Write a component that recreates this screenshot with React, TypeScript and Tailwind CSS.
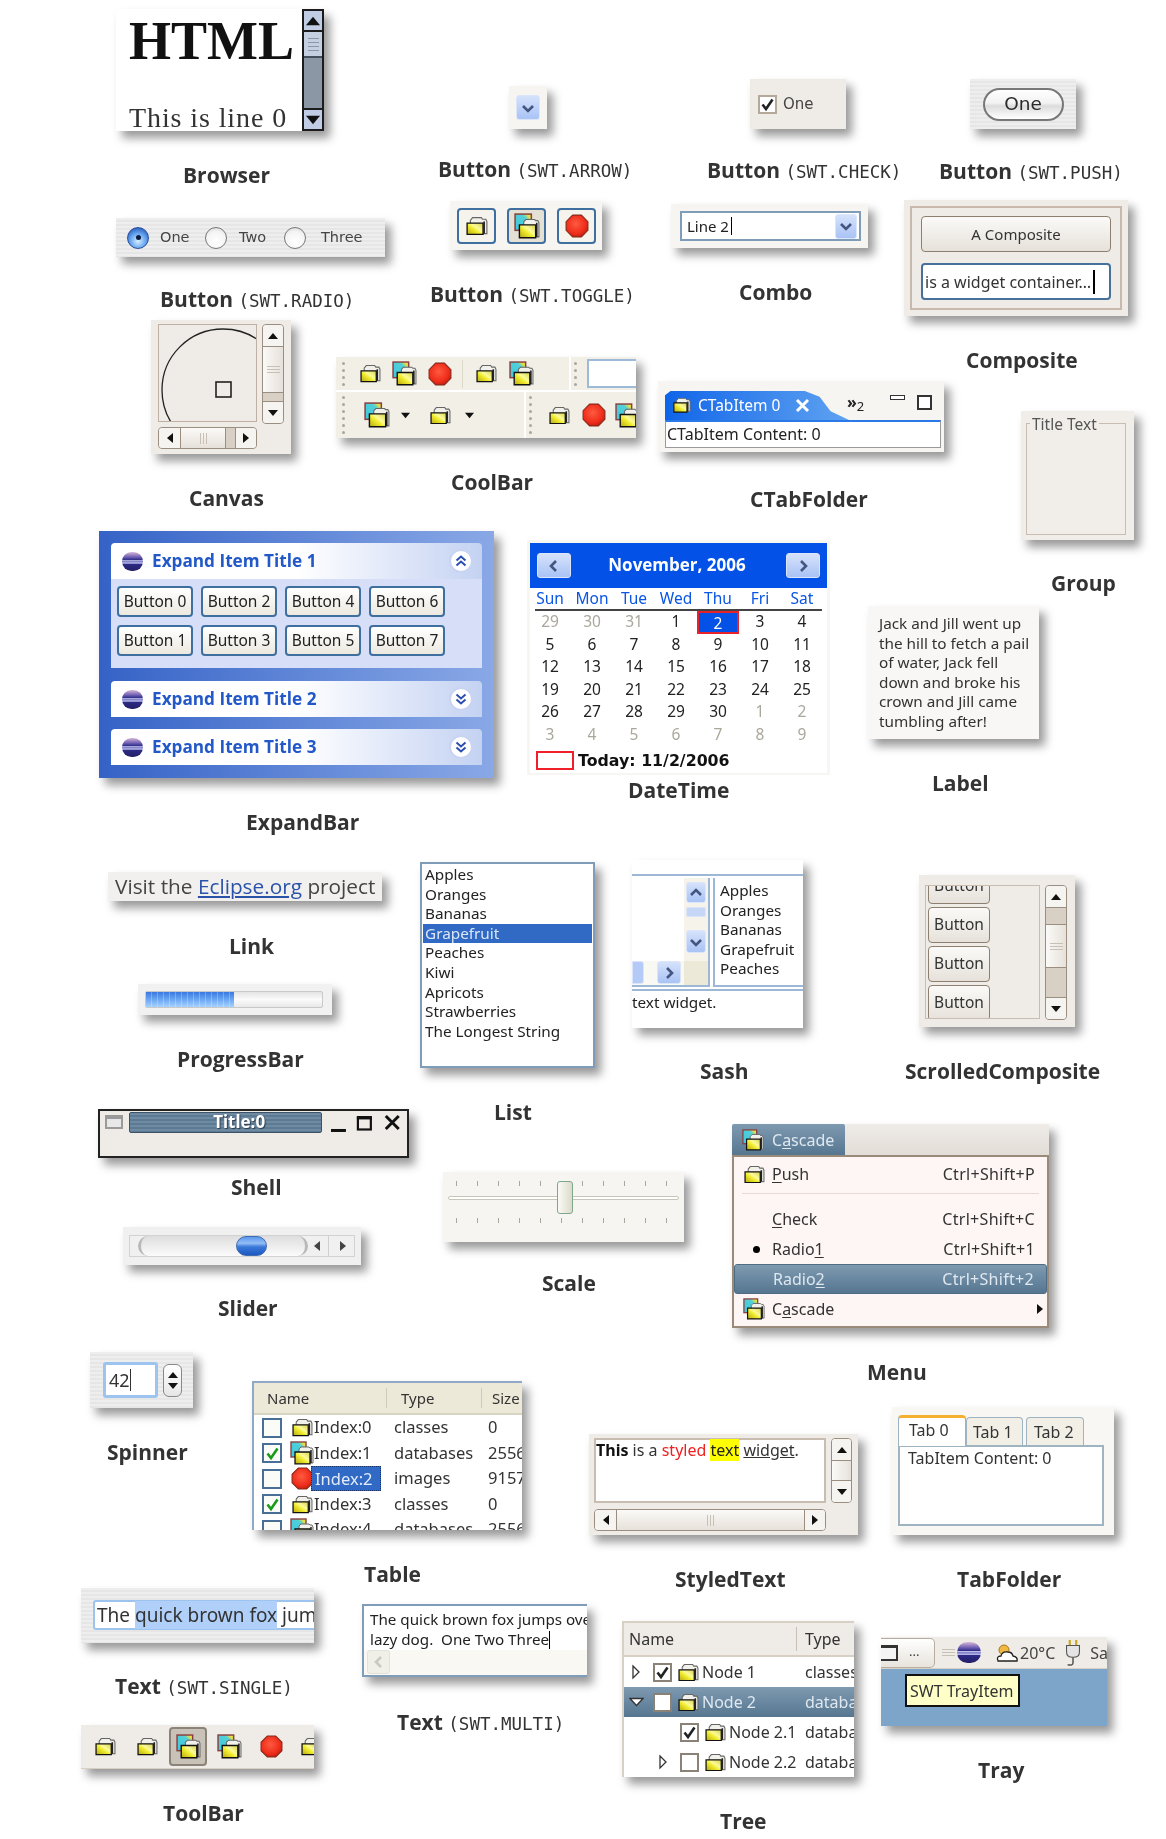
import React from "react";

const shadow = "shadow-[6px_7px_9px_rgba(0,0,0,0.4)]";
const pinstripe =
  "bg-[repeating-linear-gradient(180deg,#eeeeee_0px,#eeeeee_2px,#e6e6e6_2px,#e6e6e6_4px)]";
const gtkBtn =
  "flex items-center justify-center border border-[#8c7f70] rounded-[4px] bg-gradient-to-b from-[#fbfaf8] to-[#e6e1da]";
const xpBlueBtn =
  "flex items-center justify-center rounded-[3px] border border-[#dce6fb] bg-gradient-to-b from-[#d5e2fb] to-[#a9c3f5]";

// section captions under each widget
function Caption({ className, name, swt }: { className: string; name: string; swt?: string }) {
  return (
    <div
      className={
        "absolute whitespace-nowrap font-['Open_Sans',sans-serif] font-bold text-[21px] leading-[28px] text-[#333333] " +
        className
      }
    >
      {name}
      {swt && " "}
      {swt && (
        <span className="font-['DejaVu_Sans_Mono',monospace] font-normal text-[17.5px]">({swt})</span>
      )}
    </div>
  );
}

function SharedDefs() {
  return (
    <svg className="absolute w-0 h-0">
      <defs>
        <linearGradient id="folderFace" x1="0" y1="1" x2="1" y2="0">
          <stop offset="0" stopColor="#b8a810" />
          <stop offset="0.45" stopColor="#f2ee30" />
          <stop offset="0.6" stopColor="#fbfa9a" />
          <stop offset="1" stopColor="#d8d048" />
        </linearGradient>
        <linearGradient id="picFace" x1="0" y1="1" x2="1" y2="0">
          <stop offset="0" stopColor="#40c8e0" />
          <stop offset="0.7" stopColor="#50d0d8" />
          <stop offset="0.85" stopColor="#e8e040" />
        </linearGradient>
        <radialGradient id="stopFace" cx="0.45" cy="0.4" r="0.65">
          <stop offset="0" stopColor="#ff5a40" />
          <stop offset="0.7" stopColor="#ee2c1a" />
          <stop offset="1" stopColor="#b81c10" />
        </radialGradient>
      </defs>
    </svg>
  );
}

// the yellow open folder
function Folder({ size = 21 }: { size?: number }) {
  return (
    <svg width={size} height={size * 0.9} viewBox="0 0 20 18" className="shrink-0">
      <path d="M4 4 L6 1.5 H14 L15 3 H18 L19 5 V16 H4Z" fill="#f2f0ea" stroke="#666" />
      <path d="M16.5 5 V16" stroke="#222" strokeWidth="1.5" />
      <path d="M1 6.5 H15.5 V16.8 H1Z" fill="url(#folderFace)" stroke="#111" strokeWidth="1.2" />
    </svg>
  );
}

// picture with folder in front
function Folder2({ size = 24 }: { size?: number }) {
  return (
    <svg width={size} height={size} viewBox="0 0 24 24" className="shrink-0">
      <rect x="1" y="1" width="15" height="15" fill="url(#picFace)" stroke="#8a4040" strokeWidth="1.4" />
      <path d="M9 8 L11 6 H19 L20 7 H22 L23 9 V22 H9Z" fill="#f2f0ea" stroke="#666" />
      <path d="M21 9 V22" stroke="#222" strokeWidth="1.5" />
      <path d="M5 11 H20 V22.8 H5Z" fill="url(#folderFace)" stroke="#111" strokeWidth="1.3" />
    </svg>
  );
}

function StopIcon({ size = 22 }: { size?: number }) {
  return (
    <svg width={size} height={size} viewBox="0 0 22 22" className="shrink-0">
      <polygon
        points="7,1 15,1 21,7 21,15 15,21 7,21 1,15 1,7"
        fill="url(#stopFace)"
        stroke="#8a2a1a"
        strokeWidth="1"
      />
    </svg>
  );
}

function EclipseIcon({ className }: { className: string }) {
  return (
    <div
      className={
        "rounded-full shrink-0 bg-[linear-gradient(180deg,#d8b8d8_0%,#6a5ab0_28%,#2c2a86_42%,#dfe0ff_46%,#5858b0_52%,#dfe0ff_58%,#2c2a86_64%,#241f66_100%)] " +
        className
      }
    />
  );
}

function Tri({ dir, size = 10, color = "#111" }: { dir: "up" | "down" | "left" | "right"; size?: number; color?: string }) {
  const pts = {
    up: "5,2 10,8 0,8",
    down: "0,2 10,2 5,8",
    left: "8,0 8,10 2,5",
    right: "2,0 2,10 8,5",
  }[dir];
  return (
    <svg width={size} height={size} viewBox="0 0 10 10" className="shrink-0">
      <polygon points={pts} fill={color} />
    </svg>
  );
}

function Chevron({ dir, color = "#44557f", size = 14 }: { dir: "up" | "down" | "left" | "right"; color?: string; size?: number }) {
  const d = {
    up: "M2 9 L7 4 L12 9",
    down: "M2 5 L7 10 L12 5",
    left: "M9 2 L4 7 L9 12",
    right: "M5 2 L10 7 L5 12",
  }[dir];
  return (
    <svg width={size} height={size} viewBox="0 0 14 14" className="shrink-0">
      <path d={d} fill="none" stroke={color} strokeWidth="2.6" />
    </svg>
  );
}

function DoubleChevron({ up }: { up?: boolean }) {
  return (
    <svg width="14" height="14" viewBox="0 0 14 14">
      <path
        d={up ? "M2.5 6.5 L7 2.5 L11.5 6.5 M2.5 11.5 L7 7.5 L11.5 11.5" : "M2.5 2.5 L7 6.5 L11.5 2.5 M2.5 7.5 L7 11.5 L11.5 7.5"}
        fill="none"
        stroke="#2b4fb0"
        strokeWidth="2"
      />
    </svg>
  );
}

function Grip({ horizontal }: { horizontal?: boolean }) {
  return (
    <div className={"flex gap-[2px] " + (horizontal ? "flex-row" : "flex-col")}>
      <div className={"bg-[#c9c0b5] " + (horizontal ? "w-px h-[11px]" : "h-px w-[13px]")} />
      <div className={"bg-[#c9c0b5] " + (horizontal ? "w-px h-[11px]" : "h-px w-[13px]")} />
      <div className={"bg-[#c9c0b5] " + (horizontal ? "w-px h-[11px]" : "h-px w-[13px]")} />
    </div>
  );
}

function Dots({ n }: { n: number }) {
  return (
    <div className="flex flex-col gap-[4px]">
      {Array.from({ length: n }).map((_, i) => (
        <div key={i} className="w-[3px] h-[3px] rounded-full bg-[#aaa79c]" />
      ))}
    </div>
  );
}

function Check({ checked, className, color = "#222" }: { checked?: boolean; className: string; color?: string }) {
  return (
    <div className={"flex items-center justify-center shrink-0 " + className}>
      {checked && (
        <svg width="15" height="15" viewBox="0 0 15 15">
          <path d="M2.5 7.5 L6 12 L12.5 2.5" fill="none" stroke={color} strokeWidth="2.6" />
        </svg>
      )}
    </div>
  );
}

function Mn({ children }: { children: React.ReactNode }) {
  return <span className="underline underline-offset-2">{children}</span>;
}

function Radio({ on }: { on?: boolean }) {
  return (
    <div
      className={
        "w-[22px] h-[22px] rounded-full flex items-center justify-center shrink-0 border " +
        (on
          ? "border-[#2c4f9a] bg-[radial-gradient(circle_at_50%_65%,#d8f0ff_0%,#6aa8f0_45%,#1c50b8_90%)]"
          : "border-[#777] bg-[radial-gradient(circle_at_50%_70%,#ffffff_0%,#f4f4f4_60%,#d0d0d0_100%)]")
      }
    >
      {on && <div className="w-[5px] h-[5px] rounded-full bg-[#0a1a40]" />}
    </div>
  );
}

const dayNames = ["Sun", "Mon", "Tue", "Wed", "Thu", "Fri", "Sat"];
const calDays: [number, boolean][] = [
  [29, false], [30, false], [31, false], [1, true], [2, true], [3, true], [4, true],
  [5, true], [6, true], [7, true], [8, true], [9, true], [10, true], [11, true],
  [12, true], [13, true], [14, true], [15, true], [16, true], [17, true], [18, true],
  [19, true], [20, true], [21, true], [22, true], [23, true], [24, true], [25, true],
  [26, true], [27, true], [28, true], [29, true], [30, true], [1, false], [2, false],
  [3, false], [4, false], [5, false], [6, false], [7, false], [8, false], [9, false],
];

const fruits = ["Apples", "Oranges", "Bananas", "Grapefruit", "Peaches", "Kiwi", "Apricots", "Strawberries", "The Longest String"];

const tableRows = [
  { check: false, icon: "f", name: "Index:0", type: "classes", size: "0" },
  { check: true, icon: "p", name: "Index:1", type: "databases", size: "25567" },
  { check: false, icon: "s", name: "Index:2", type: "images", size: "91571" },
  { check: true, icon: "f", name: "Index:3", type: "classes", size: "0" },
  { check: false, icon: "p", name: "Index:4", type: "databases", size: "25567" },
];

function BrowserWidget() {
  return (
    <div className={"absolute left-[116px] top-[9px] w-[208px] h-[122px] bg-white flex " + shadow}>
      <div className="flex-1 overflow-hidden pl-[13px] font-['Liberation_Serif',serif] text-[#111]">
        <div className="font-bold text-[54px] leading-[60px] mt-[2px]">HTML</div>
        <div className="text-[28px] leading-[26px] tracking-[0.9px] mt-[34px] text-[#333] whitespace-nowrap">This is line 0</div>
      </div>
      <div className="w-[22px] flex flex-col border-2 border-[#1c1c1c] bg-[#8c97a6]">
        <div className="h-[21px] flex items-center justify-center bg-[#c0cde4] border-b-2 border-[#1c1c1c]">
          <Tri dir="up" size={14} />
        </div>
        <div className="h-[26px] flex items-center justify-center bg-[#c4d0e2] border-b-2 border-[#44505e]">
          <div className="flex flex-col gap-[3px]">
            <div className="w-[11px] h-px bg-[#8a96aa]" />
            <div className="w-[11px] h-px bg-[#8a96aa]" />
            <div className="w-[11px] h-px bg-[#8a96aa]" />
            <div className="w-[11px] h-px bg-[#8a96aa]" />
          </div>
        </div>
        <div className="flex-1" />
        <div className="h-[21px] flex items-center justify-center bg-[#c0cde4] border-t-2 border-[#1c1c1c]">
          <Tri dir="down" size={14} />
        </div>
      </div>
    </div>
  );
}

function TopButtons() {
  return (
    <>
      {/* arrow */}
      <div className={"absolute left-[509px] top-[86px] w-[38px] h-[43px] bg-[#f6f5f1] flex items-center justify-center " + shadow}>
        <div className={"w-[24px] h-[25px] " + xpBlueBtn}>
          <Chevron dir="down" />
        </div>
      </div>
      {/* check */}
      <div className={"absolute left-[750px] top-[79px] w-[96px] h-[50px] bg-[#efebe7] flex items-center pl-[8px] gap-[6px] " + shadow}>
        <Check checked className="w-[19px] h-[19px] border-2 border-[#b5a99a] bg-white" />
        <span className="text-[15px] text-[#444] font-['DejaVu_Sans',sans-serif]">One</span>
      </div>
      {/* push */}
      <div className={"absolute left-[970px] top-[79px] w-[106px] h-[50px] flex items-center justify-center " + pinstripe + " " + shadow}>
        <div className="w-[81px] h-[33px] rounded-full border-2 border-[#777] flex items-center justify-center bg-[linear-gradient(180deg,#ffffff_0%,#f2f2f2_45%,#dcdcdc_55%,#ffffff_100%)] text-[18.5px] text-[#2a2a2a] font-['DejaVu_Sans',sans-serif]">
          One
        </div>
      </div>
      {/* radio */}
      <div className={"absolute left-[116px] top-[218px] w-[269px] h-[39px] flex items-center pl-[11px] text-[14.5px] text-[#444] font-['DejaVu_Sans',sans-serif] " + pinstripe + " " + shadow}>
        <Radio on />
        <span className="ml-[11px] w-[36px]">One</span>
        <span className="ml-[9px]"><Radio /></span>
        <span className="ml-[12px] w-[36px]">Two</span>
        <span className="ml-[9px]"><Radio /></span>
        <span className="ml-[15px]">Three</span>
      </div>
      {/* toggle */}
      <div className={"absolute left-[450px] top-[201px] w-[152px] h-[49px] bg-[#f6f5f1] flex items-center pl-[7px] gap-[11px] " + shadow}>
        <div className="w-[39px] h-[36px] rounded-[4px] border-2 border-[#3f6f9f] bg-[#f5f3ec] flex items-center justify-center">
          <Folder size={22} />
        </div>
        <div className="w-[39px] h-[36px] rounded-[4px] border-2 border-[#3f6f9f] bg-[#e4e0d4] flex items-center justify-center">
          <Folder2 size={26} />
        </div>
        <div className="w-[39px] h-[36px] rounded-[4px] border-2 border-[#3f6f9f] bg-[#f5f3ec] flex items-center justify-center">
          <StopIcon size={24} />
        </div>
      </div>
      {/* combo */}
      <div className={"absolute left-[671px] top-[204px] w-[197px] h-[44px] bg-[#f6f5f1] p-[7px] pl-[9px] " + shadow}>
        <div className="h-full border-2 border-[#7f9db9] bg-white flex items-center pl-[5px] pr-[2px] text-[15px] text-[#222]">
          <span>Line 2</span>
          <div className="w-px h-[18px] bg-black ml-[2px]" />
          <div className={"ml-auto w-[22px] h-[25px] " + xpBlueBtn}>
            <Chevron dir="down" />
          </div>
        </div>
      </div>
      {/* composite */}
      <div className={"absolute left-[904px] top-[200px] w-[224px] h-[116px] bg-[#efebe7] p-[6px] " + shadow}>
        <div className="h-full border-2 border-[#c9b9ac] flex flex-col px-[9px] pt-[8px] gap-[11px] text-[15px] text-[#333]">
          <div className={"h-[36px] " + gtkBtn}>A Composite</div>
          <div className="h-[37px] border-2 border-[#47709a] rounded-[4px] bg-white flex items-center pl-[2px] text-[16px] whitespace-nowrap">
            <span>is a widget container…</span>
            <div className="ml-[2px] w-[1.5px] h-[24px] bg-black" />
          </div>
        </div>
      </div>
    </>
  );
}

function CanvasWidget() {
  return (
    <div className={"absolute left-[151px] top-[320px] w-[140px] h-[134px] bg-[#efebe7] pl-[7px] pt-[4px] grid grid-cols-[99px_22px] grid-rows-[98px_22px] gap-x-[5px] gap-y-[5px] " + shadow}>
      <div className="border border-[#bfb0a3] overflow-hidden">
        <svg width="97" height="96" viewBox="0 0 97 96">
          <circle cx="64" cy="65" r="61" fill="none" stroke="#222" strokeWidth="1.3" />
          <rect x="57" y="57" width="15" height="15" fill="none" stroke="#222" strokeWidth="1.6" />
        </svg>
      </div>
      <div className="h-[100px] flex flex-col border border-[#9a8e80] rounded-[4px] bg-[#d8d0c4] overflow-hidden">
        <div className="h-[22px] flex items-center justify-center bg-[#f6f4f0] border-b border-[#9a8e80]"><Tri dir="up" /></div>
        <div className="h-[46px] flex items-center justify-center bg-gradient-to-r from-[#fbfaf8] to-[#e6e1da] border-b border-[#9a8e80]"><Grip /></div>
        <div className="flex-1" />
        <div className="h-[22px] flex items-center justify-center bg-[#f6f4f0] border-t border-[#9a8e80]"><Tri dir="down" /></div>
      </div>
      <div className="flex border border-[#9a8e80] rounded-[4px] bg-[#d8d0c4] overflow-hidden">
        <div className="w-[22px] flex items-center justify-center bg-[#f6f4f0] border-r border-[#9a8e80]"><Tri dir="left" /></div>
        <div className="w-[45px] flex items-center justify-center bg-gradient-to-b from-[#fbfaf8] to-[#e6e1da] border-r border-[#9a8e80]"><Grip horizontal /></div>
        <div className="flex-1" />
        <div className="w-[21px] flex items-center justify-center bg-[#f6f4f0] border-l border-[#9a8e80]"><Tri dir="right" /></div>
      </div>
    </div>
  );
}

function CoolBarWidget() {
  return (
    <div className={"absolute left-[336px] top-[357px] w-[300px] h-[81px] overflow-hidden flex flex-col bg-[#f1efe6] " + shadow}>
      <div className="h-[35px] flex items-center border-b-2 border-white pl-[6px] overflow-hidden">
        <Dots n={4} />
        <span className="ml-[15px]"><Folder size={21} /></span>
        <span className="ml-[11px]"><Folder2 size={25} /></span>
        <span className="ml-[11px]"><StopIcon size={24} /></span>
        <div className="ml-[10px] w-px h-[28px] bg-[#dcd8c8] shrink-0" />
        <span className="ml-[13px]"><Folder size={21} /></span>
        <span className="ml-[12px]"><Folder2 size={25} /></span>
        <div className="ml-[35px] w-[2px] h-[34px] bg-white shrink-0" />
        <div className="ml-[3px]"><Dots n={4} /></div>
        <div className="ml-[10px] w-[70px] h-[29px] border-2 border-[#9dbbd8] bg-white shrink-0" />
      </div>
      <div className="flex-1 flex items-center pl-[6px] overflow-hidden">
        <Dots n={6} />
        <span className="ml-[19px]"><Folder2 size={26} /></span>
        <span className="ml-[11px]"><Tri dir="down" size={9} /></span>
        <span className="ml-[20px]"><Folder size={21} /></span>
        <span className="ml-[14px]"><Tri dir="down" size={9} /></span>
        <div className="ml-[50px] w-[2px] h-[46px] bg-white shrink-0" />
        <div className="ml-[3px]"><Dots n={6} /></div>
        <span className="ml-[17px]"><Folder size={21} /></span>
        <span className="ml-[12px]"><StopIcon size={24} /></span>
        <span className="ml-[9px]"><Folder2 size={25} /></span>
      </div>
    </div>
  );
}

function CTabFolderWidget() {
  return (
    <div className={"absolute left-[658px] top-[381px] w-[286px] h-[71px] bg-[#f6f5f1] pl-[7px] pr-[3px] pt-[10px] " + shadow}>
      <div className="h-[29px] flex items-center relative">
        <div className="absolute left-0 top-0 bottom-0 w-[184px] bg-gradient-to-r from-[#0c64e8] to-[#5ea2f0] [clip-path:polygon(3%_0,76%_0,84%_20%,90%_70%,100%_100%,0_100%,0_15%)]" />
        <div className="relative flex items-center pl-[8px] text-[15.5px] text-white">
          <Folder size={18} />
          <span className="ml-[7px]">CTabItem 0</span>
          <svg width="15" height="15" viewBox="0 0 15 15" className="ml-[15px]">
            <path d="M2 2 L13 13 M13 2 L2 13" stroke="#fff" strokeWidth="3" />
          </svg>
        </div>
        <span className="absolute left-[182px] top-[2px] text-[16px] font-bold text-[#222] leading-[18px]">
          »<sub className="text-[13px] font-normal">2</sub>
        </span>
        <div className="absolute left-[225px] top-[4px] w-[15px] h-[5px] border border-[#333] bg-[#fff]" />
        <div className="absolute left-[252px] top-[4px] w-[15px] h-[15px] border-2 border-[#333] bg-[#fff]" />
      </div>
      <div className="h-[28px] border border-[#9a9a9a] border-t-[#2b78e8] border-t-2 bg-white pl-[1px] text-[16px] text-[#222] leading-[25px]">
        CTabItem Content: 0
      </div>
    </div>
  );
}

function GroupWidget() {
  return (
    <div className={"absolute left-[1021px] top-[411px] w-[113px] h-[129px] bg-[#f1eeea] pl-[5px] pt-[12px] pr-[8px] pb-[5px] " + shadow}>
      <div className="h-full border border-[#c9bdb2] pl-[5px] relative">
        <span className="absolute left-[3px] -top-[9px] bg-[#f1eeea] px-[2px] text-[15.5px] leading-[18px] text-[#555] whitespace-nowrap">Title Text</span>
      </div>
    </div>
  );
}

function ExpandHeader({ title, up }: { title: string; up?: boolean }) {
  return (
    <div className="h-[36px] flex items-center pl-[11px] pr-[9px] rounded-t-[4px] bg-[linear-gradient(90deg,#ffffff_50%,#c4d2f2_100%)]">
      <EclipseIcon className="w-[21px] h-[19px]" />
      <span className="ml-[9px] font-['Open_Sans',sans-serif] font-bold text-[17.2px] text-[#2258c8]">{title}</span>
      <div className="ml-auto w-[24px] h-[24px] rounded-full bg-white border-2 border-[#c8d4f2] flex items-center justify-center">
        <DoubleChevron up={up} />
      </div>
    </div>
  );
}

function ExpandBarWidget() {
  const labels = [0, 2, 4, 6, 1, 3, 5, 7];
  return (
    <div className={"absolute left-[99px] top-[531px] w-[395px] h-[247px] bg-gradient-to-r from-[#3562c6] to-[#8aa8e6] px-[12px] pt-[12px] flex flex-col " + shadow}>
      <div>
        <ExpandHeader title="Expand Item Title 1" up />
        <div className="h-[89px] bg-[#d6dff7] pl-[6px] pt-[7px] grid grid-cols-[76px_76px_76px_76px] grid-rows-[31px_31px] gap-x-[8px] gap-y-[8px]">
          {labels.map((n) => (
            <div key={n} className="rounded-[4px] border-2 border-[#3f6f9f] bg-gradient-to-b from-white to-[#ece9e0] flex items-center justify-center text-[15.5px] text-[#222] whitespace-nowrap">
              Button {n}
            </div>
          ))}
        </div>
      </div>
      <div className="mt-[13px]">
        <ExpandHeader title="Expand Item Title 2" />
      </div>
      <div className="mt-[12px]">
        <ExpandHeader title="Expand Item Title 3" />
      </div>
    </div>
  );
}

function DateTimeWidget() {
  return (
    <div className="absolute left-[527px] top-[540px] w-[303px] h-[235px] bg-[#f7f6f2] p-[3px] flex flex-col">
      <div className="bg-white flex-1 flex flex-col">
        <div className="h-[45px] bg-[#0351e6] flex items-center justify-between px-[7px]">
          <div className={"w-[34px] h-[25px] " + xpBlueBtn}><Chevron dir="left" /></div>
          <span className="font-['Open_Sans',sans-serif] font-bold text-[17px] text-white -mt-[2px] -ml-[3px]">November, 2006</span>
          <div className={"w-[34px] h-[25px] " + xpBlueBtn}><Chevron dir="right" /></div>
        </div>
        <div className="w-[294px] -ml-[1px] h-[21px] grid grid-cols-7 text-[15.5px] text-[#0a55e6] text-center leading-[21px]">
          {dayNames.map((d) => (
            <span key={d}>{d}</span>
          ))}
        </div>
        <div className="h-[2px] mx-[5px] bg-[#444]" />
        <div className="w-[294px] -ml-[1px] grid grid-cols-7 auto-rows-[22.5px] text-[15.5px] text-center leading-[20px]">
          {calDays.map(([n, cur], i) => (
            <div
              key={i}
              className={
                i === 4
                  ? "bg-[#0351e6] text-white border-2 border-[#e8222a]"
                  : cur
                    ? "text-[#222]"
                    : "text-[#aaa79c]"
              }
            >
              {n}
            </div>
          ))}
        </div>
        <div className="flex items-center pl-[6px] mt-[3px]">
          <div className="w-[38px] h-[19px] border-2 border-[#f0202a]" />
          <span className="ml-[4px] font-['DejaVu_Sans',sans-serif] font-bold text-[15.8px] text-[#111] whitespace-nowrap">Today: 11/2/2006</span>
        </div>
      </div>
    </div>
  );
}

function LabelWidget() {
  return (
    <div className={"absolute left-[868px] top-[606px] w-[171px] h-[133px] bg-[#f8f7f5] pl-[11px] pt-[8px] text-[15.3px] leading-[19.6px] text-[#333] whitespace-nowrap " + shadow}>
      Jack and Jill went up
      <br />the hill to fetch a pail
      <br />of water, Jack fell
      <br />down and broke his
      <br />crown and Jill came
      <br />tumbling after!
    </div>
  );
}

function LinkWidgets() {
  return (
    <>
      <div className={"absolute left-[108px] top-[872px] w-[274px] h-[29px] bg-[#f1f0ee] pl-[7px] flex items-center font-['Open_Sans',sans-serif] text-[20.8px] text-[#444] whitespace-nowrap " + shadow}>
        Visit the&nbsp;<span className="text-[#2a52a8] underline">Eclipse.org</span>&nbsp;project
      </div>
      <div className={"absolute left-[138px] top-[984px] w-[194px] h-[31px] bg-[#f1f1f1] pl-[7px] pr-[9px] py-[7px] " + shadow}>
        <div className="h-full border border-[#c9c9c9] rounded-[2px] bg-gradient-to-b from-[#e4e4e4] via-[#fbfbfb] to-[#e8e8e8]">
          <div className="w-[88px] h-full bg-[repeating-linear-gradient(90deg,transparent_0px,transparent_5px,rgba(255,255,255,0.25)_5px,rgba(255,255,255,0.25)_6px),linear-gradient(180deg,#3a78e0_0%,#5f9ef0_40%,#a6d2ff_100%)]" />
        </div>
      </div>
    </>
  );
}

function ShellWidget() {
  return (
    <div className={"absolute left-[98px] top-[1109px] w-[311px] h-[49px] bg-[#efebe7] border-2 border-[#222] flex items-start " + shadow}>
      <div className="mt-[4px] ml-[5px] w-[18px] h-[14px] border-2 border-[#9a9a9a] border-t-[4px] bg-[#e8e8e8]" />
      <div className="ml-[6px] mt-[1px] w-[194px] h-[21px] rounded-[2px] border border-[#3d5266] bg-[repeating-linear-gradient(180deg,#6f8ba3_0px,#6f8ba3_2px,#5d7a93_2px,#5d7a93_4px)] text-center pl-[27px] text-[17px] leading-[18px] font-bold text-white [text-shadow:1px_1px_1px_#2a3a4a]">
        Title:0
      </div>
      <svg width="78" height="22" viewBox="0 0 78 22" className="ml-[7px] mt-[3px]">
        <rect x="2" y="15" width="15" height="3" fill="#111" />
        <rect x="29" y="3.5" width="13" height="12" fill="none" stroke="#111" strokeWidth="2.2" />
        <rect x="28" y="2" width="15" height="3.4" fill="#111" />
        <path d="M57 2 L70 15 M70 2 L57 15" stroke="#111" strokeWidth="3" />
      </svg>
    </div>
  );
}

function ListWidget() {
  return (
    <div className={"absolute left-[420px] top-[862px] w-[175px] h-[206px] bg-white border-2 border-[#7f9db9] pt-[1px] px-[1px] text-[15.3px] leading-[19.6px] text-[#222] " + shadow}>
      {fruits.map((f) => (
        <div key={f} className={f === "Grapefruit" ? "bg-[#316ac5] text-[#dbe6f5] pl-[2px]" : "pl-[2px]"}>
          {f}
        </div>
      ))}
    </div>
  );
}

function SashWidget() {
  return (
    <div className={"absolute left-[632px] top-[860px] w-[171px] h-[168px] bg-white text-[15.3px] text-[#222] " + shadow}>
      <div className="h-[14px]" />
      <div className="border-t-2 border-b-0 border-[#9db8d6] h-[113px] flex pt-[2px]">
        <div className="w-[78px] h-[109px] border-r-2 border-b-2 border-[#9db8d6] flex flex-col">
          <div className="flex-1 flex justify-end">
            <div className="w-[24px] bg-[#f5f3ea] flex flex-col items-center pt-[4px]">
              <div className={"w-[20px] h-[21px] " + xpBlueBtn}><Chevron dir="up" /></div>
              <div className="w-[20px] h-[10px] mt-[4px] rounded-[2px] bg-[#c6d6f7] border border-[#dbe5fa]" />
              <div className={"w-[20px] h-[23px] mt-[13px] " + xpBlueBtn}><Chevron dir="down" /></div>
            </div>
          </div>
          <div className="h-[24px] flex bg-[#f9f8f2]">
            <div className="w-[12px] h-[23px] rounded-r-[3px] bg-[#b4cbf7] border border-[#dce6fb]" />
            <div className={"ml-[13px] w-[24px] h-[23px] " + xpBlueBtn}><Chevron dir="right" /></div>
            <div className="ml-auto w-[24px] bg-[#ece9d8]" />
          </div>
        </div>
        <div className="ml-[3px] flex-1 border-l-2 border-b-2 border-[#9db8d6] pl-[5px] pt-[3px] leading-[19.5px]">
          {fruits.slice(0, 5).map((f) => (
            <div key={f}>{f}</div>
          ))}
        </div>
      </div>
      <div className="border-t-2 border-[#9db8d6] mt-[2px] pt-[1px] leading-[20px]">text widget.</div>
    </div>
  );
}

function ScrolledWidget() {
  return (
    <div className={"absolute left-[919px] top-[875px] w-[156px] h-[152px] bg-[#efebe7] flex pl-[6px] pt-[10px] " + shadow}>
      <div className="w-[115px] h-[134px] border border-[#c9bdb2] overflow-hidden pl-[2px] text-[15.5px] text-[#333] flex flex-col gap-[3px] justify-end">
        <div className={"w-[62px] h-[36px] shrink-0 " + gtkBtn}>Button</div>
        <div className={"w-[62px] h-[36px] shrink-0 " + gtkBtn}>Button</div>
        <div className={"w-[62px] h-[36px] shrink-0 " + gtkBtn}>Button</div>
        <div className={"w-[62px] h-[36px] shrink-0 -mb-[3px] " + gtkBtn}>Button</div>
      </div>
      <div className="ml-[5px] w-[22px] h-[135px] flex flex-col border border-[#9a8e80] rounded-[4px] bg-[#d8d0c4] overflow-hidden">
        <div className="h-[22px] flex items-center justify-center bg-[#f6f4f0] border-b border-[#9a8e80]"><Tri dir="up" /></div>
        <div className="h-[16px]" />
        <div className="h-[44px] flex items-center justify-center bg-gradient-to-r from-[#fbfaf8] to-[#e6e1da] border-y border-[#9a8e80]"><Grip /></div>
        <div className="flex-1" />
        <div className="h-[22px] flex items-center justify-center bg-[#f6f4f0] border-t border-[#9a8e80]"><Tri dir="down" /></div>
      </div>
    </div>
  );
}

function ScaleWidget() {
  const ticks = Array.from({ length: 11 });
  return (
    <div className={"absolute left-[443px] top-[1172px] w-[241px] h-[70px] bg-[#f6f5f1] flex flex-col " + shadow}>
      <div className="h-[9px]" />
      <div className="flex pl-[13px] gap-[20px] h-[6px]">
        {ticks.map((_, i) => (
          <div key={i} className="w-px h-[5px] bg-[#aaa79c]" />
        ))}
      </div>
      <div className="relative mt-[9px] mx-[5px] h-[4px] rounded-full border border-[#c8c5b8] bg-white">
        <div className="absolute left-[108px] -top-[16px] w-[16px] h-[33px] rounded-[3px] border border-[#7fa88a] bg-gradient-to-r from-[#fafaf4] to-[#dcdacc]" />
      </div>
      <div className="flex pl-[13px] gap-[20px] h-[6px] mt-[18px]">
        {ticks.map((_, i) => (
          <div key={i} className="w-px h-[5px] bg-[#aaa79c]" />
        ))}
      </div>
    </div>
  );
}

function MenuRow({ icon, label, hint, active }: { icon?: React.ReactNode; label: React.ReactNode; hint?: string; active?: boolean }) {
  return (
    <div
      className={
        "flex items-center h-[30px] pl-[8px] pr-[12px] whitespace-nowrap " +
        (active ? "rounded-[3px] border border-[#4f6c85] bg-gradient-to-b from-[#7e9ab1] to-[#567690] text-[#dfe8ef]" : "text-[#333]")
      }
    >
      <div className="w-[24px] flex justify-center">{icon}</div>
      <span className="ml-[6px]">{label}</span>
      <span className="ml-auto tracking-[0.3px]">{hint}</span>
    </div>
  );
}

function MenuWidget() {
  return (
    <div className={"absolute left-[732px] top-[1124px] w-[317px] h-[204px] flex flex-col text-[16px] " + shadow}>
      <div className="h-[31px] bg-gradient-to-b from-[#efebe7] to-[#e2ddd6] flex">
        <div className="w-[113px] rounded-t-[2px] bg-gradient-to-b from-[#7e9ab1] to-[#567690] flex items-center pl-[10px] text-[#dfe8ef]">
          <Folder2 size={22} />
          <span className="ml-[8px]">C<Mn>a</Mn>scade</span>
        </div>
      </div>
      <div className="flex-1 border-2 border-[#9a8a7a] bg-[#fef6f4] flex flex-col pt-[2px]">
        <MenuRow icon={<Folder size={21} />} label={<><Mn>P</Mn>ush</>} hint="Ctrl+Shift+P" />
        <div className="h-px bg-[#ead9d2] mx-[8px] mt-[4px] mb-[10px]" />
        <MenuRow label={<><Mn>C</Mn>heck</>} hint="Ctrl+Shift+C" />
        <MenuRow icon={<div className="ml-[4px] w-[7px] h-[7px] rounded-full bg-black" />} label={<>Radio<Mn>1</Mn></>} hint="Ctrl+Shift+1" />
        <MenuRow active label={<>Radio<Mn>2</Mn></>} hint="Ctrl+Shift+2" />
        <div className="relative">
          <MenuRow icon={<Folder2 size={22} />} label={<>C<Mn>a</Mn>scade</>} />
          <span className="absolute right-[2px] top-[10px]"><Tri dir="right" /></span>
        </div>
      </div>
    </div>
  );
}

function SliderWidget() {
  return (
    <div className={"absolute left-[123px] top-[1227px] w-[238px] h-[38px] bg-[#f0f0f0] px-[6px] py-[8px] " + shadow}>
      <div className="h-full border border-[#d2d2d2] flex items-center pl-[8px]">
        <div className="w-[170px] h-[20px] rounded-full border-x-[3px] border-[#b8b8b8] bg-gradient-to-b from-[#dedede] to-[#fbfbfb] pl-[95px]">
          <div className="w-[31px] h-[20px] rounded-full border border-[#3d6cb0] bg-[linear-gradient(180deg,#5a98f0_0%,#94bdf5_35%,#3a78d8_55%,#1c58c0_100%)]" />
        </div>
        <span className="ml-[4px]"><Tri dir="left" color="#444" /></span>
        <div className="ml-[6px] w-px h-[20px] bg-[#cfcfcf]" />
        <span className="ml-[9px]"><Tri dir="right" color="#444" /></span>
      </div>
    </div>
  );
}

function SpinnerWidget() {
  return (
    <div className={"absolute left-[90px] top-[1352px] w-[103px] h-[56px] flex items-center pl-[13px] " + pinstripe + " " + shadow}>
      <div className="w-[55px] h-[36px] border-[3px] border-[#9cc4ee] rounded-[3px] bg-white flex items-center pl-[3px] text-[18px] text-[#333]">
        42<div className="w-[1.5px] h-[22px] bg-[#333]" />
      </div>
      <div className="ml-[5px] w-[19px] h-[33px] rounded-[6px] border border-[#888] bg-gradient-to-b from-white to-[#e6e6e6] flex flex-col items-center justify-center gap-[1px]">
        <Tri dir="up" size={10} />
        <Tri dir="down" size={10} />
      </div>
    </div>
  );
}

function TableWidget() {
  return (
    <div className={"absolute left-[252px] top-[1381px] w-[270px] h-[149px] bg-white border-t-2 border-l-2 border-[#8fa9c6] overflow-hidden text-[16.5px] text-[#333] " + shadow}>
      <div className="h-[32px] bg-[#ece9d8] border-b-2 border-[#d8d4c2] flex items-center text-[15px]">
        <div className="w-[132px] pl-[13px]">Name</div>
        <div className="w-px h-[20px] bg-[#cfcbb8]" />
        <div className="w-[94px] pl-[14px]">Type</div>
        <div className="w-px h-[20px] bg-[#cfcbb8]" />
        <div className="pl-[10px]">Size</div>
      </div>
      {tableRows.map((r) => (
        <div key={r.name} className="h-[25.5px] flex items-center whitespace-nowrap">
          <Check checked={r.check} color="#1a9a1a" className="ml-[8px] w-[20px] h-[20px] border-2 border-[#4a6f97] bg-[#fbfbf8]" />
          <div className="w-[30px] ml-[5px] flex justify-center shrink-0">
            {r.icon === "f" && <Folder size={21} />}
            {r.icon === "p" && <Folder2 size={24} />}
            {r.icon === "s" && <StopIcon size={23} />}
          </div>
          <div className={"w-[70px] shrink-0 -ml-[6px] pl-[3px] " + (r.icon === "s" ? "bg-[#316ac5] text-[#e2ecfa] h-[25px] leading-[23px] border border-dotted border-[#15306a]" : "")}>
            {r.name}
          </div>
          <div className="w-[107px] shrink-0 pl-[13px]">{r.type}</div>
          <div>{r.size}</div>
        </div>
      ))}
    </div>
  );
}

function StyledTextWidget() {
  return (
    <div className={"absolute left-[589px] top-[1434px] w-[269px] h-[101px] bg-[#efebe7] pl-[5px] pt-[4px] grid grid-cols-[232px_21px] grid-rows-[65px_22px] gap-x-[5px] gap-y-[6px] " + shadow}>
      <div className="border-2 border-[#c9bdb2] bg-white pt-[1px] text-[16px] leading-[18px] text-[#333] whitespace-nowrap">
        <b className="text-[#111]">This</b> is a <span className="text-[#f02020]">styled</span>{" "}
        <span className="bg-[#ffff00] text-[#222]">text</span> <u>widget</u>.
      </div>
      <div className="flex flex-col border border-[#9a8e80] rounded-[4px] overflow-hidden">
        <div className="h-[22px] flex items-center justify-center bg-[#f6f4f0] border-b border-[#9a8e80]"><Tri dir="up" /></div>
        <div className="flex-1 bg-gradient-to-r from-[#fbfaf8] to-[#e6e1da]" />
        <div className="h-[22px] flex items-center justify-center bg-[#f6f4f0] border-t border-[#9a8e80]"><Tri dir="down" /></div>
      </div>
      <div className="flex border border-[#9a8e80] rounded-[4px] overflow-hidden">
        <div className="w-[22px] flex items-center justify-center bg-[#f6f4f0] border-r border-[#9a8e80]"><Tri dir="left" /></div>
        <div className="flex-1 flex items-center justify-center bg-gradient-to-b from-[#fbfaf8] to-[#e6e1da]"><Grip horizontal /></div>
        <div className="w-[21px] flex items-center justify-center bg-[#f6f4f0] border-l border-[#9a8e80]"><Tri dir="right" /></div>
      </div>
    </div>
  );
}

function TabFolderWidget() {
  return (
    <div className={"absolute left-[892px] top-[1407px] w-[222px] h-[128px] bg-[#f8f7f3] pl-[6px] pt-[7px] pr-[10px] text-[16px] text-[#333] " + shadow}>
      <div className="flex items-end h-[31px]">
        <div className="w-[68px] h-[31px] rounded-t-[4px] border-t-[3px] border-[#f6b030] border-x border-x-[#9fb4c2] bg-white pl-[10px] leading-[24px] relative z-10 -mb-[1px]">Tab 0</div>
        <div className="w-[57px] h-[28px] rounded-t-[4px] border border-[#9fb4c2] border-b-0 bg-[#f1efe6] pl-[6px] leading-[28px]">Tab 1</div>
        <div className="ml-[3px] w-[58px] h-[28px] rounded-t-[4px] border border-[#9fb4c2] border-b-0 bg-[#f1efe6] pl-[7px] leading-[28px]">Tab 2</div>
      </div>
      <div className="h-[81px] border-2 border-[#9fb4c2] bg-white pl-[8px] leading-[22px]">TabItem Content: 0</div>
    </div>
  );
}

function TextWidgets() {
  return (
    <>
      <div className={"absolute left-[81px] top-[1588px] w-[233px] h-[55px] overflow-hidden pl-[12px] pt-[12px] " + pinstripe + " " + shadow}>
        <div className="w-[240px] h-[30px] border-2 border-[#9cc4ee] rounded-[3px] bg-white pl-[2px] flex items-center font-['Noto_Sans',sans-serif] text-[19px] text-[#333] whitespace-nowrap">
          The&nbsp;<span className="bg-[#b0d0fa]">quick brown fox</span>&nbsp;jumps
        </div>
      </div>
      <div className={"absolute left-[362px] top-[1604px] w-[225px] h-[73px] bg-white border-2 border-r-0 border-[#7f9db9] overflow-hidden flex flex-col text-[15.2px] leading-[19.5px] text-[#222] whitespace-nowrap " + shadow}>
        <div className="pl-[6px] pt-[4px] h-[44px]">
          The quick brown fox jumps over
          <br />lazy dog.&nbsp; One Two Three<span className="inline-block w-px h-[18px] bg-black align-middle" />
        </div>
        <div className="flex-1 bg-[#f9f8f2] pl-[3px]">
          <div className="w-[23px] h-[24px] rounded-[3px] bg-[#f1f0e8] border border-[#e3e2d8] flex items-center justify-center">
            <Chevron dir="left" color="#c8c8c4" />
          </div>
        </div>
      </div>
    </>
  );
}

function ToolBarWidget() {
  return (
    <div className={"absolute left-[81px] top-[1725px] w-[233px] h-[44px] bg-[#efebe7] overflow-hidden flex items-center border-b border-[#d8d0c4] " + shadow}>
      <span className="ml-[14px]"><Folder size={21} /></span>
      <span className="ml-[21px]"><Folder size={21} /></span>
      <div className="ml-[11px] w-[38px] h-[39px] rounded-[4px] border-2 border-[#8c8378] bg-[#c8c2b9] flex items-center justify-center shrink-0">
        <Folder2 size={25} />
      </div>
      <span className="ml-[10px]"><Folder2 size={25} /></span>
      <span className="ml-[18px]"><StopIcon size={23} /></span>
      <span className="ml-[18px]"><Folder size={21} /></span>
    </div>
  );
}

function TreeRow({ indent, arrow, checked, name, type, selected }: { indent: number; arrow?: "right" | "down"; checked?: boolean; name: string; type: string; selected?: boolean }) {
  return (
    <div className={"h-[30px] flex items-center whitespace-nowrap " + (selected ? "bg-gradient-to-b from-[#7e9ab1] to-[#567690] text-[#dfe8ef]" : "")}>
      <div className="w-[181px] shrink-0 flex items-center" style={{ paddingLeft: indent }}>
        <div className="w-[24px] flex justify-center">
          {arrow === "right" && (
            <svg width="10" height="16" viewBox="0 0 10 16"><path d="M2 2 L8 8 L2 14Z" fill="none" stroke="#333" strokeWidth="1.3" /></svg>
          )}
          {arrow === "down" && (
            <svg width="15" height="10" viewBox="0 0 15 10"><path d="M1 1.5 H14 L7.5 8.5Z" fill="#fff" stroke="#333" strokeWidth="1.3" /></svg>
          )}
        </div>
        <Check checked={checked} className="ml-[5px] w-[19px] h-[19px] border-2 border-[#8a8276] bg-white" />
        <span className="ml-[6px]"><Folder size={21} /></span>
        <span className="ml-[3px]">{name}</span>
      </div>
      <span>{type}</span>
    </div>
  );
}

function TreeWidget() {
  return (
    <div className={"absolute left-[622px] top-[1621px] w-[232px] h-[156px] bg-white border-t-2 border-l-2 border-[#d8cfc5] overflow-hidden text-[16px] text-[#333] " + shadow}>
      <div className="h-[34px] bg-[#efebe7] border-b-2 border-[#d8cfc5] flex items-center">
        <div className="w-[172px] pl-[5px]">Name</div>
        <div className="w-px h-[24px] bg-[#c8c0b6]" />
        <div className="pl-[8px]">Type</div>
      </div>
      <TreeRow indent={0} arrow="right" checked name="Node 1" type="classes" />
      <TreeRow indent={0} arrow="down" name="Node 2" type="databases" selected />
      <TreeRow indent={27} checked name="Node 2.1" type="databases" />
      <TreeRow indent={27} arrow="right" name="Node 2.2" type="databases" />
    </div>
  );
}

function TrayWidget() {
  return (
    <div className={"absolute left-[881px] top-[1637px] w-[226px] h-[89px] bg-[#7da4c9] overflow-hidden text-[16px] text-[#444] " + shadow}>
      <div className="h-[32px] bg-[#efebe7] border-b border-[#d8d0c4] flex items-center whitespace-nowrap">
        <div className="w-[54px] h-[30px] rounded-r-[5px] border border-l-0 border-[#b8ad9f] bg-gradient-to-b from-white to-[#e8e3dc] flex items-center shrink-0">
          <div className="w-[17px] h-[16px] border-2 border-l-0 border-[#333] border-t-[3px] bg-[#f4f4f4]" />
          <span className="ml-[11px] text-[13px] -mt-[2px]">...</span>
        </div>
        <div className="ml-[7px]"><Grip /></div>
        <EclipseIcon className="ml-[2px] w-[24px] h-[21px]" />
        <svg width="24" height="22" viewBox="0 0 24 22" className="ml-[14px] shrink-0">
          <circle cx="9" cy="8" r="5" fill="#f0b840" stroke="#a87820" />
          <path d="M3 19 Q1 14 6 14 Q7 9 13 10 Q17 10 18 14 Q23 15 22 19Z" fill="#fff" stroke="#222" strokeWidth="1.3" />
        </svg>
        <span className="ml-[1px]">20°C</span>
        <svg width="18" height="28" viewBox="0 0 16 26" className="ml-[9px] shrink-0">
          <path d="M5 1 V6 M11 1 V6" stroke="#c8a820" strokeWidth="2" />
          <path d="M2 6 H14 V12 Q14 17 8 17 Q2 17 2 12Z" fill="#e4e4e4" stroke="#555" />
          <path d="M8 17 V22 Q8 25 3 24" stroke="#555" fill="none" strokeWidth="1.4" />
        </svg>
        <span className="ml-[8px]">Sat</span>
      </div>
      <div className="ml-[24px] mt-[5px] w-[115px] h-[33px] border-2 border-[#111] bg-[#ffffc8] flex items-center pl-[3px] text-[#333] whitespace-nowrap">
        SWT TrayItem
      </div>
    </div>
  );
}

export default function App() {
  return (
    <div className="relative w-[1166px] h-[1839px] bg-white overflow-hidden font-['Noto_Sans',sans-serif] blur-[0.35px]">
      <SharedDefs />

      <BrowserWidget />
      <TopButtons />
      <CanvasWidget />
      <CoolBarWidget />
      <CTabFolderWidget />
      <GroupWidget />
      <ExpandBarWidget />
      <DateTimeWidget />
      <LabelWidget />
      <LinkWidgets />
      <ShellWidget />
      <ListWidget />
      <SashWidget />
      <ScrolledWidget />
      <ScaleWidget />
      <MenuWidget />
      <SliderWidget />
      <SpinnerWidget />
      <TableWidget />
      <StyledTextWidget />
      <TabFolderWidget />
      <TextWidgets />
      <ToolBarWidget />
      <TreeWidget />
      <TrayWidget />

      <Caption className="left-[183px] top-[161px]" name="Browser" />
      <Caption className="left-[438px] top-[155px]" name="Button" swt="SWT.ARROW" />
      <Caption className="left-[707px] top-[156px]" name="Button" swt="SWT.CHECK" />
      <Caption className="left-[939px] top-[157px]" name="Button" swt="SWT.PUSH" />
      <Caption className="left-[160px] top-[285px]" name="Button" swt="SWT.RADIO" />
      <Caption className="left-[430px] top-[280px]" name="Button" swt="SWT.TOGGLE" />
      <Caption className="left-[739px] top-[278px]" name="Combo" />
      <Caption className="left-[966px] top-[346px]" name="Composite" />
      <Caption className="left-[189px] top-[484px]" name="Canvas" />
      <Caption className="left-[451px] top-[468px]" name="CoolBar" />
      <Caption className="left-[750px] top-[485px]" name="CTabFolder" />
      <Caption className="left-[1051px] top-[569px]" name="Group" />
      <Caption className="left-[246px] top-[808px]" name="ExpandBar" />
      <Caption className="left-[628px] top-[776px]" name="DateTime" />
      <Caption className="left-[932px] top-[769px]" name="Label" />
      <Caption className="left-[229px] top-[932px]" name="Link" />
      <Caption className="left-[177px] top-[1045px]" name="ProgressBar" />
      <Caption className="left-[494px] top-[1098px]" name="List" />
      <Caption className="left-[700px] top-[1057px]" name="Sash" />
      <Caption className="left-[905px] top-[1057px]" name="ScrolledComposite" />
      <Caption className="left-[231px] top-[1173px]" name="Shell" />
      <Caption className="left-[542px] top-[1269px]" name="Scale" />
      <Caption className="left-[867px] top-[1358px]" name="Menu" />
      <Caption className="left-[218px] top-[1294px]" name="Slider" />
      <Caption className="left-[107px] top-[1438px]" name="Spinner" />
      <Caption className="left-[364px] top-[1560px]" name="Table" />
      <Caption className="left-[675px] top-[1565px]" name="StyledText" />
      <Caption className="left-[957px] top-[1565px]" name="TabFolder" />
      <Caption className="left-[115px] top-[1672px]" name="Text" swt="SWT.SINGLE" />
      <Caption className="left-[397px] top-[1708px]" name="Text" swt="SWT.MULTI" />
      <Caption className="left-[163px] top-[1799px]" name="ToolBar" />
      <Caption className="left-[720px] top-[1807px]" name="Tree" />
      <Caption className="left-[978px] top-[1756px]" name="Tray" />
    </div>
  );
}
